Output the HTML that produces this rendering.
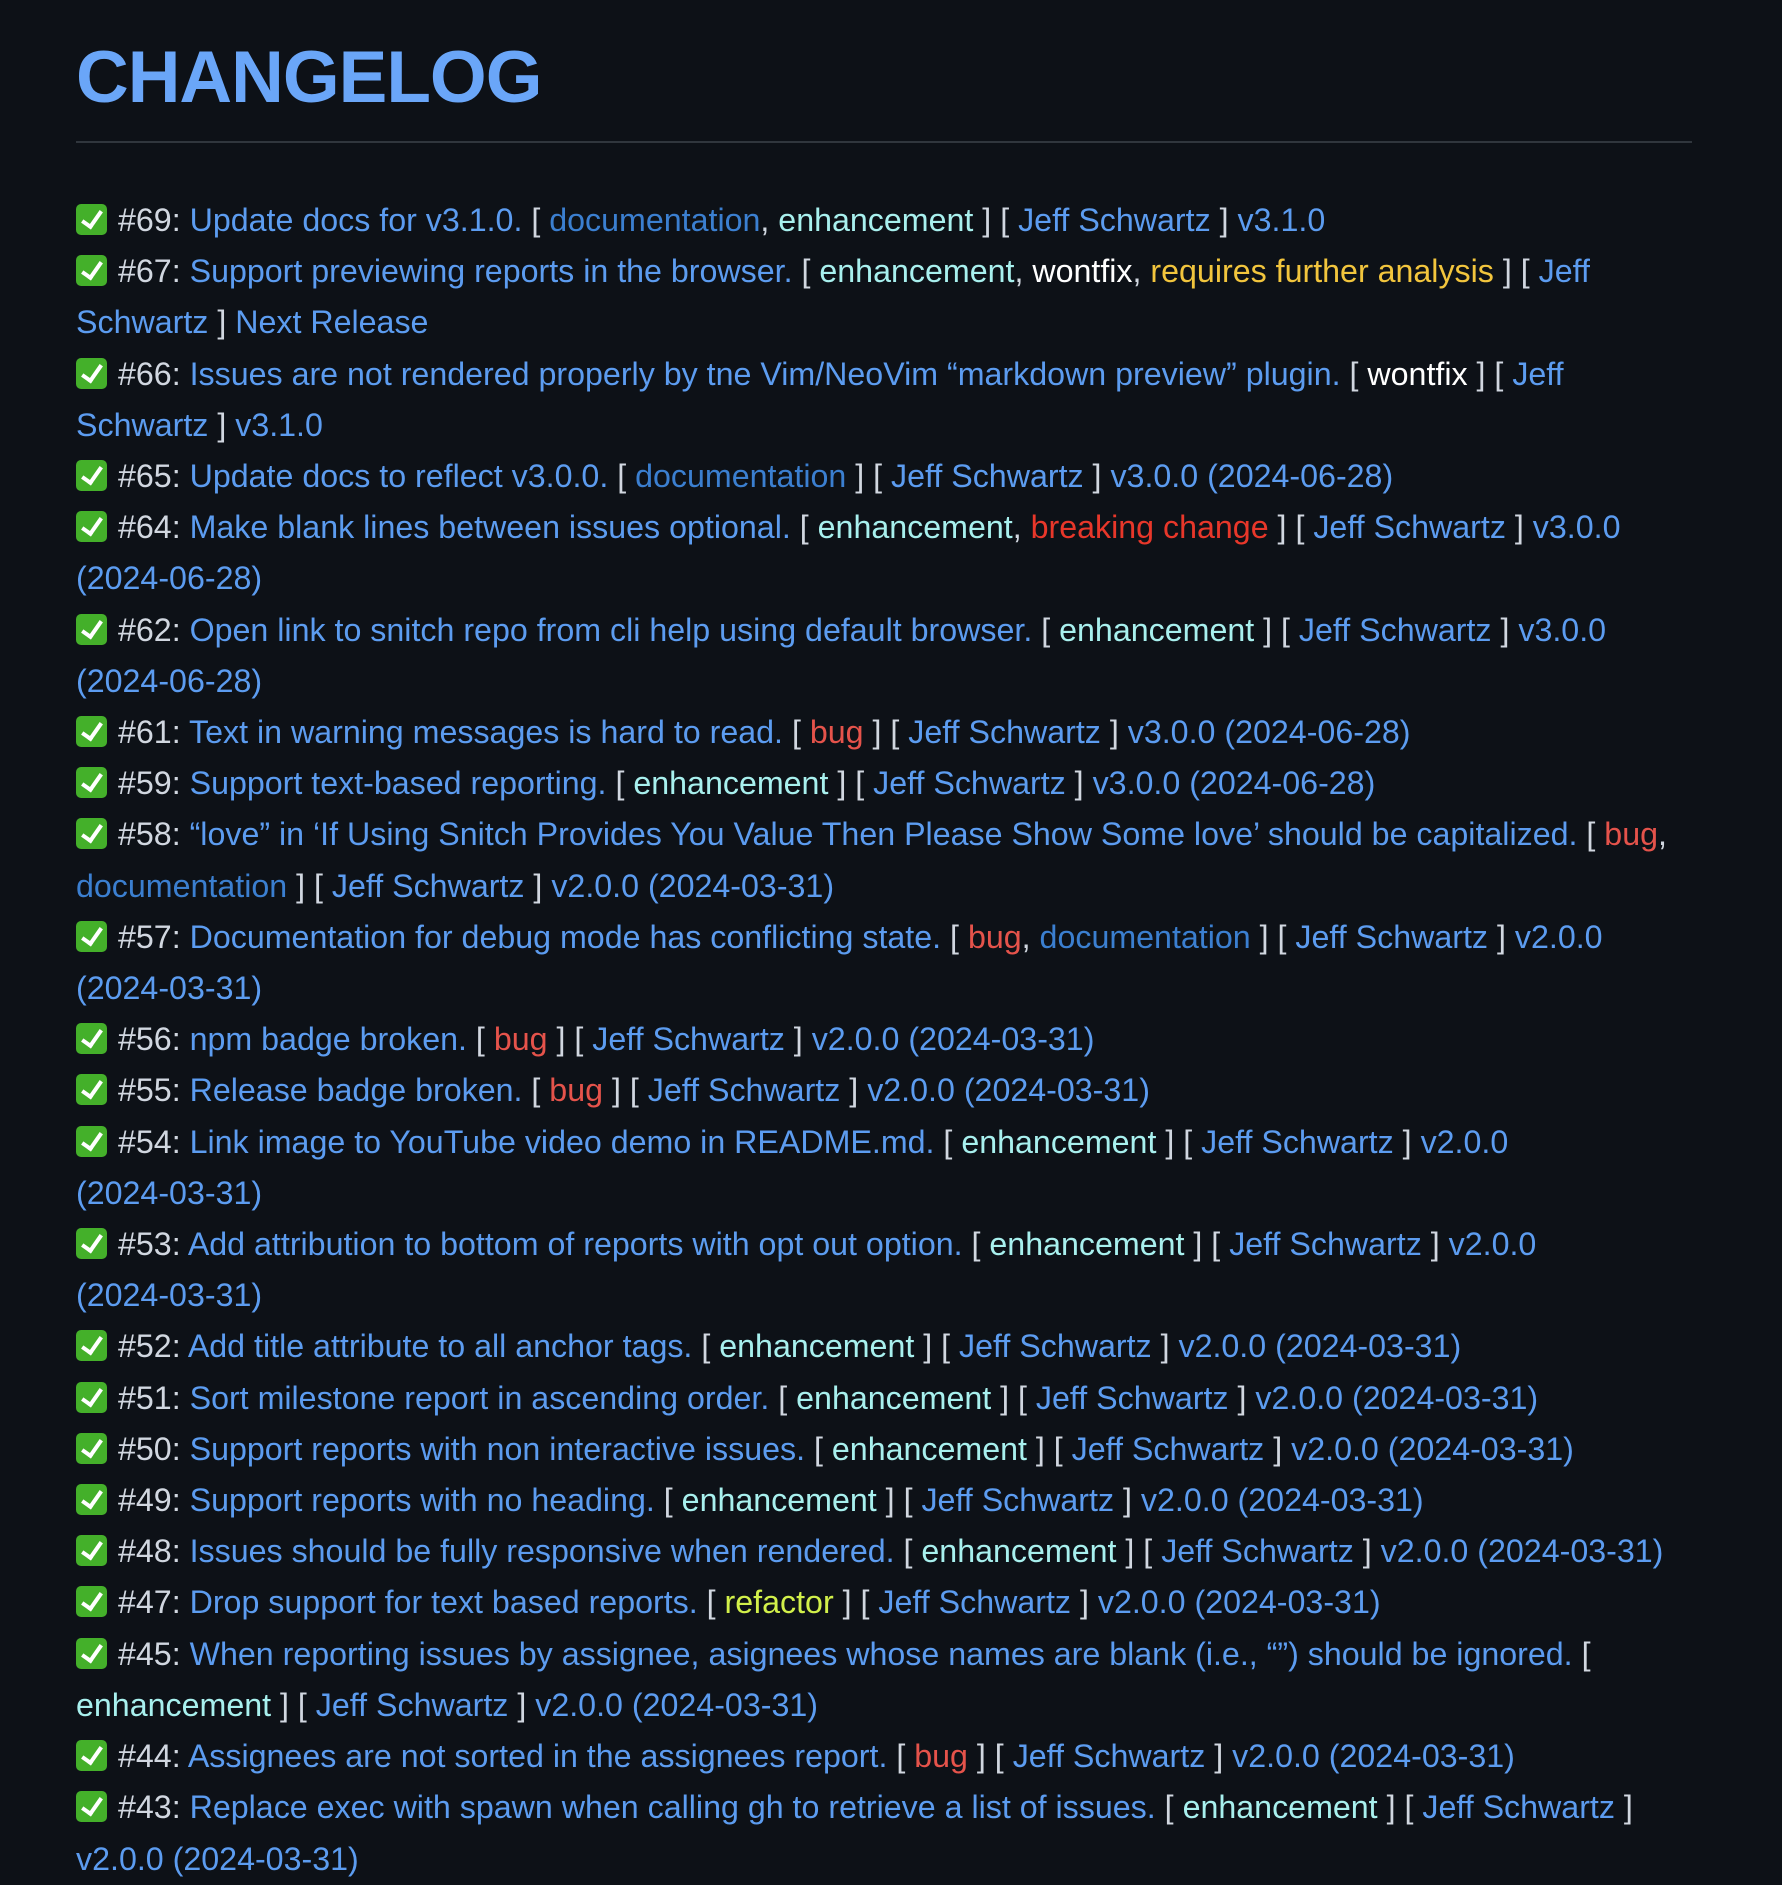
<!DOCTYPE html>
<html><head><meta charset="utf-8"><style>
html,body{margin:0;background:#0d1117;}
body{width:1782px;height:1838px;overflow:hidden;font-family:"Liberation Sans",Arial,sans-serif;color:#d1d7e0;}
.w{position:absolute;left:76px;width:1616px;top:0;}
h1{margin:0;padding-top:36px;font-size:73px;font-weight:bold;color:#6aa6f8;height:105px;line-height:84px;border-bottom:2px solid #30363d;letter-spacing:-1px;}
.list{margin-top:52px;font-size:32.2px;line-height:51.2px;}
.c{display:inline-block;width:31px;height:31px;background:#44b02a;border-radius:5px;vertical-align:-4px;position:relative;margin-right:11px;}
.c:after{content:"";position:absolute;left:10px;top:3px;width:8px;height:17px;border:solid #fff;border-width:0 4px 4px 0;transform:rotate(35deg);}
a{color:#5c9cf0;text-decoration:none}
i{font-style:normal;white-space:nowrap}
.d{color:#3b7fd0}.e{color:#a8f0ee}.x{color:#fff}.r{color:#f2c53d}.b{color:#e5534b}.bc{color:#e8372a}.f{color:#d2f04a}
</style></head><body><div class="w">
<h1>CHANGELOG</h1>
<div class="list">
<div><span class="c"></span>#69: <a>Update docs for v3.1.0.</a> [ <span class="d">documentation</span>, <span class="e">enhancement</span> ] [ <a>Jeff Schwartz</a> ] <a>v3.1.0</a></div>
<div><span class="c"></span>#67: <a>Support previewing reports in the browser.</a> [ <span class="e">enhancement</span>, <span class="x">wontfix</span>, <span class="r">requires further analysis</span> ] [ <a>Jeff Schwartz</a> ] <a>Next Release</a></div>
<div><span class="c"></span>#66: <a>Issues are not rendered properly by tne Vim/NeoVim “markdown preview” plugin.</a> [ <span class="x">wontfix</span> ] [ <a>Jeff Schwartz</a> ] <a>v3.1.0</a></div>
<div><span class="c"></span>#65: <a>Update docs to reflect v3.0.0.</a> [ <span class="d">documentation</span> ] [ <a>Jeff Schwartz</a> ] <a>v3.0.0 <i>(2024-06-28)</i></a></div>
<div><span class="c"></span>#64: <a>Make blank lines between issues optional.</a> [ <span class="e">enhancement</span>, <span class="bc">breaking change</span> ] [ <a>Jeff Schwartz</a> ] <a>v3.0.0 <i>(2024-06-28)</i></a></div>
<div><span class="c"></span>#62: <a>Open link to snitch repo from cli help using default browser.</a> [ <span class="e">enhancement</span> ] [ <a>Jeff Schwartz</a> ] <a>v3.0.0 <i>(2024-06-28)</i></a></div>
<div><span class="c"></span>#61: <a>Text in warning messages is hard to read.</a> [ <span class="b">bug</span> ] [ <a>Jeff Schwartz</a> ] <a>v3.0.0 <i>(2024-06-28)</i></a></div>
<div><span class="c"></span>#59: <a>Support text-based reporting.</a> [ <span class="e">enhancement</span> ] [ <a>Jeff Schwartz</a> ] <a>v3.0.0 <i>(2024-06-28)</i></a></div>
<div><span class="c"></span>#58: <a>“love” in ‘If Using Snitch Provides You Value Then Please Show Some love’ should be capitalized.</a> [ <span class="b">bug</span>, <span class="d">documentation</span> ] [ <a>Jeff Schwartz</a> ] <a>v2.0.0 <i>(2024-03-31)</i></a></div>
<div><span class="c"></span>#57: <a>Documentation for debug mode has conflicting state.</a> [ <span class="b">bug</span>, <span class="d">documentation</span> ] [ <a>Jeff Schwartz</a> ] <a>v2.0.0 <i>(2024-03-31)</i></a></div>
<div><span class="c"></span>#56: <a>npm badge broken.</a> [ <span class="b">bug</span> ] [ <a>Jeff Schwartz</a> ] <a>v2.0.0 <i>(2024-03-31)</i></a></div>
<div><span class="c"></span>#55: <a>Release badge broken.</a> [ <span class="b">bug</span> ] [ <a>Jeff Schwartz</a> ] <a>v2.0.0 <i>(2024-03-31)</i></a></div>
<div><span class="c"></span>#54: <a>Link image to YouTube video demo in README.md.</a> [ <span class="e">enhancement</span> ] [ <a>Jeff Schwartz</a> ] <a>v2.0.0 <i>(2024-03-31)</i></a></div>
<div><span class="c"></span>#53: <a>Add attribution to bottom of reports with opt out option.</a> [ <span class="e">enhancement</span> ] [ <a>Jeff Schwartz</a> ] <a>v2.0.0 <i>(2024-03-31)</i></a></div>
<div><span class="c"></span>#52: <a>Add title attribute to all anchor tags.</a> [ <span class="e">enhancement</span> ] [ <a>Jeff Schwartz</a> ] <a>v2.0.0 <i>(2024-03-31)</i></a></div>
<div><span class="c"></span>#51: <a>Sort milestone report in ascending order.</a> [ <span class="e">enhancement</span> ] [ <a>Jeff Schwartz</a> ] <a>v2.0.0 <i>(2024-03-31)</i></a></div>
<div><span class="c"></span>#50: <a>Support reports with non interactive issues.</a> [ <span class="e">enhancement</span> ] [ <a>Jeff Schwartz</a> ] <a>v2.0.0 <i>(2024-03-31)</i></a></div>
<div><span class="c"></span>#49: <a>Support reports with no heading.</a> [ <span class="e">enhancement</span> ] [ <a>Jeff Schwartz</a> ] <a>v2.0.0 <i>(2024-03-31)</i></a></div>
<div><span class="c"></span>#48: <a>Issues should be fully responsive when rendered.</a> [ <span class="e">enhancement</span> ] [ <a>Jeff Schwartz</a> ] <a>v2.0.0 <i>(2024-03-31)</i></a></div>
<div><span class="c"></span>#47: <a>Drop support for text based reports.</a> [ <span class="f">refactor</span> ] [ <a>Jeff Schwartz</a> ] <a>v2.0.0 <i>(2024-03-31)</i></a></div>
<div><span class="c"></span>#45: <a>When reporting issues by assignee, asignees whose names are blank (i.e., “”) should be ignored.</a> [ <span class="e">enhancement</span> ] [ <a>Jeff Schwartz</a> ] <a>v2.0.0 <i>(2024-03-31)</i></a></div>
<div><span class="c"></span>#44: <a>Assignees are not sorted in the assignees report.</a> [ <span class="b">bug</span> ] [ <a>Jeff Schwartz</a> ] <a>v2.0.0 <i>(2024-03-31)</i></a></div>
<div><span class="c"></span>#43: <a>Replace exec with spawn when calling gh to retrieve a list of issues.</a> [ <span class="e">enhancement</span> ] [ <a>Jeff Schwartz</a> ] <a>v2.0.0 <i>(2024-03-31)</i></a></div>
</div></div></body></html>
